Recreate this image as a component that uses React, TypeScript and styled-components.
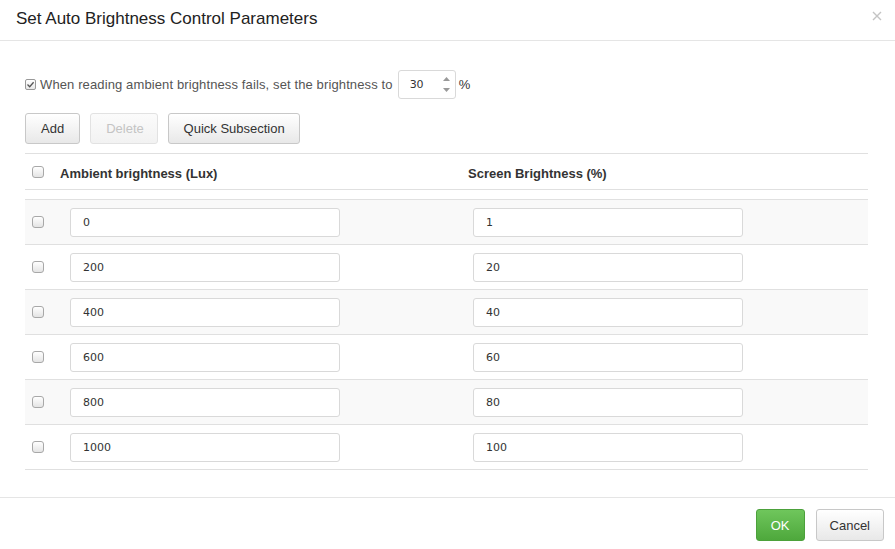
import React, { useState } from 'react'
import styled, { createGlobalStyle } from 'styled-components'

const GlobalStyle = createGlobalStyle`
  html, body {
    margin: 0;
    padding: 0;
    background: #fff;
  }
  body {
    font-family: 'Liberation Sans', Arial, sans-serif;
    color: #333;
  }
`

const rows = [
  { lux: '0', screen: '1' },
  { lux: '200', screen: '20' },
  { lux: '400', screen: '40' },
  { lux: '600', screen: '60' },
  { lux: '800', screen: '80' },
  { lux: '1000', screen: '100' },
]

const App = () => {
  const [fallback, setFallback] = useState('30')

  return (
    <>
      <GlobalStyle />
      <StyledDialog>
        <StyledHeader>
          <StyledTitle>Set Auto Brightness Control Parameters</StyledTitle>
          <StyledClose aria-label="close">
            <svg width="10" height="10" viewBox="0 0 10 10">
              <path d="M1 1L9 9M9 1L1 9" stroke="#c4c4c4" strokeWidth="1.4" />
            </svg>
          </StyledClose>
        </StyledHeader>

        <StyledBody>
          <StyledFallbackRow>
            <StyledCheckLabel>
              <StyledSmallCheck>
                <svg width="9" height="9" viewBox="0 0 9 9">
                  <path d="M1.5 4.5L3.7 6.7L7.6 2.2" stroke="#555" strokeWidth="1.3" fill="none" />
                </svg>
              </StyledSmallCheck>
              When reading ambient brightness fails, set the brightness to
            </StyledCheckLabel>
            <StyledSpin>
              <StyledSpinInput value={fallback} onChange={(e) => setFallback(e.target.value)} />
              <StyledSpinArrows>
                <svg width="7" height="4" viewBox="0 0 7 4">
                  <path d="M0 4L3.5 0L7 4Z" fill="#999" />
                </svg>
                <svg width="7" height="4" viewBox="0 0 7 4">
                  <path d="M0 0L3.5 4L7 0Z" fill="#999" />
                </svg>
              </StyledSpinArrows>
            </StyledSpin>
            <StyledUnit>%</StyledUnit>
          </StyledFallbackRow>

          <StyledToolbar>
            <StyledButton>Add</StyledButton>
            <StyledButton disabled>Delete</StyledButton>
            <StyledButton>Quick Subsection</StyledButton>
          </StyledToolbar>

          <StyledTable>
            <StyledHeadRow>
              <StyledCheckCell>
                <StyledBox />
              </StyledCheckCell>
              <StyledHeadCell>Ambient brightness (Lux)</StyledHeadCell>
              <StyledHeadCell>Screen Brightness (%)</StyledHeadCell>
            </StyledHeadRow>
            <StyledRows>
              {rows.map((r, i) => (
                <StyledRow key={r.lux} $striped={i % 2 === 0}>
                  <StyledCheckCell>
                    <StyledBox />
                  </StyledCheckCell>
                  <StyledCell $indent={10}>
                    <StyledTextInput defaultValue={r.lux} />
                  </StyledCell>
                  <StyledCell $indent={5}>
                    <StyledTextInput defaultValue={r.screen} />
                  </StyledCell>
                </StyledRow>
              ))}
            </StyledRows>
          </StyledTable>
        </StyledBody>

        <StyledFooter>
          <StyledButton $primary $pad={14}>OK</StyledButton>
          <StyledButton $pad={13}>Cancel</StyledButton>
        </StyledFooter>
      </StyledDialog>
    </>
  )
}

export default App

const StyledDialog = styled.div`
  width: 895px;
  height: 549px;
  display: flex;
  flex-direction: column;
  background: #fff;
`

const StyledHeader = styled.div`
  height: 41px;
  border-bottom: 1px solid #e5e5e5;
  display: flex;
  align-items: center;
  justify-content: space-between;
  padding: 0 13px 0 16px;
  box-sizing: border-box;
`

const StyledTitle = styled.h1`
  margin: 0;
  font-size: 17px;
  font-weight: normal;
  color: #222;
  position: relative;
  top: -1px;
`

const StyledClose = styled.button`
  border: none;
  background: none;
  padding: 0;
  cursor: pointer;
  display: flex;
  position: relative;
  top: -4px;
`

const StyledBody = styled.div`
  flex: 1;
  padding: 28px 27px 0 25px;
`

const StyledFallbackRow = styled.div`
  display: flex;
  align-items: center;
  font-size: 13px;
  height: 30px;
`

const StyledCheckLabel = styled.label`
  display: flex;
  align-items: center;
  gap: 4px;
  color: #555;
  letter-spacing: 0.12px;
  margin-right: 5px;
`

const StyledSmallCheck = styled.span`
  width: 9px;
  height: 9px;
  border: 1px solid #999;
  border-radius: 2px;
  background: linear-gradient(#fff, #e8e8e8);
  display: flex;
  align-items: center;
  justify-content: center;
  flex-shrink: 0;
`

const StyledSpin = styled.div`
  width: 58px;
  height: 29px;
  flex-shrink: 0;
  box-sizing: border-box;
  border: 1px solid #d9d9d9;
  border-radius: 3px;
  display: flex;
  align-items: center;
`

const StyledSpinInput = styled.input`
  width: 38px;
  box-sizing: border-box;
  border: none;
  outline: none;
  padding: 0 0 0 11px;
  font-family: 'DejaVu Sans', Verdana, sans-serif;
  font-size: 11px;
  color: #333;
  background: transparent;
`

const StyledSpinArrows = styled.div`
  display: flex;
  flex-direction: column;
  gap: 7px;
  margin-left: 6px;
`

const StyledUnit = styled.span`
  margin-left: 3px;
  color: #333;
`

const StyledButton = styled.button<{ $primary?: boolean; $pad?: number }>`
  height: 31px;
  padding: 0 ${({ $pad }) => $pad ?? 15}px;
  font-family: 'Liberation Sans', Arial, sans-serif;
  font-size: 13px;
  white-space: nowrap;
  border-radius: 3px;
  box-sizing: border-box;
  cursor: pointer;
  color: ${({ $primary }) => ($primary ? '#fff' : '#333')};
  border: 1px solid ${({ $primary }) => ($primary ? '#4ca13b' : '#c8c8c8')};
  background: ${({ $primary }) =>
    $primary ? 'linear-gradient(#6fc65c, #4ea83c)' : 'linear-gradient(#ffffff, #e8e8e8)'};

  &:disabled {
    color: #c4c4c4;
    border-color: #e2e2e2;
    background: linear-gradient(#fbfbfb, #f2f2f2);
    cursor: default;
  }
`

const StyledToolbar = styled.div`
  display: flex;
  gap: 10px;
  margin-top: 14px;

  ${StyledButton}:nth-child(2) {
    width: 68px;
  }
  ${StyledButton}:nth-child(3) {
    width: 132px;
    padding: 0;
  }
`

const StyledTable = styled.div`
  margin-top: 9px;
  border-top: 1px solid #e0e0e0;
  width: 843px;
`

const rowGrid = `
  display: grid;
  grid-template-columns: 35px 408px 1fr;
  align-items: center;
`

const StyledHeadRow = styled.div`
  ${rowGrid};
  height: 35px;
  border-bottom: 1px solid #e0e0e0;
`

const StyledHeadCell = styled.div`
  font-size: 13px;
  font-weight: bold;
  color: #333;
  padding-top: 3px;
`

const StyledRows = styled.div`
  margin-top: 9px;
  border-top: 1px solid #e0e0e0;
`

const StyledRow = styled.div<{ $striped: boolean }>`
  ${rowGrid};
  height: 45px;
  box-sizing: border-box;
  border-bottom: 1px solid #e0e0e0;
  background: ${({ $striped }) => ($striped ? '#f9f9f9' : '#fff')};
`

const StyledCheckCell = styled.div`
  display: flex;
  padding-left: 7px;
`

const StyledBox = styled.span`
  width: 10px;
  height: 10px;
  border: 1px solid #a8a8a8;
  border-radius: 3px;
  background: linear-gradient(#fff, #e4e4e4);
`

const StyledCell = styled.div<{ $indent: number }>`
  padding-left: ${({ $indent }) => $indent}px;
  display: flex;
`

const StyledTextInput = styled.input`
  width: 270px;
  height: 29px;
  box-sizing: border-box;
  border: 1px solid #d9d9d9;
  border-radius: 3px;
  padding: 0 12px;
  font-family: 'DejaVu Sans', Verdana, sans-serif;
  font-size: 11px;
  color: #333;
  background: #fff;
  outline: none;
`

const StyledFooter = styled.div`
  height: 52px;
  border-top: 1px solid #e5e5e5;
  display: flex;
  justify-content: flex-end;
  align-items: flex-start;
  gap: 11px;
  padding: 11px 11px 0 0;
  box-sizing: border-box;

  ${StyledButton} {
    height: 32px;
  }
`
